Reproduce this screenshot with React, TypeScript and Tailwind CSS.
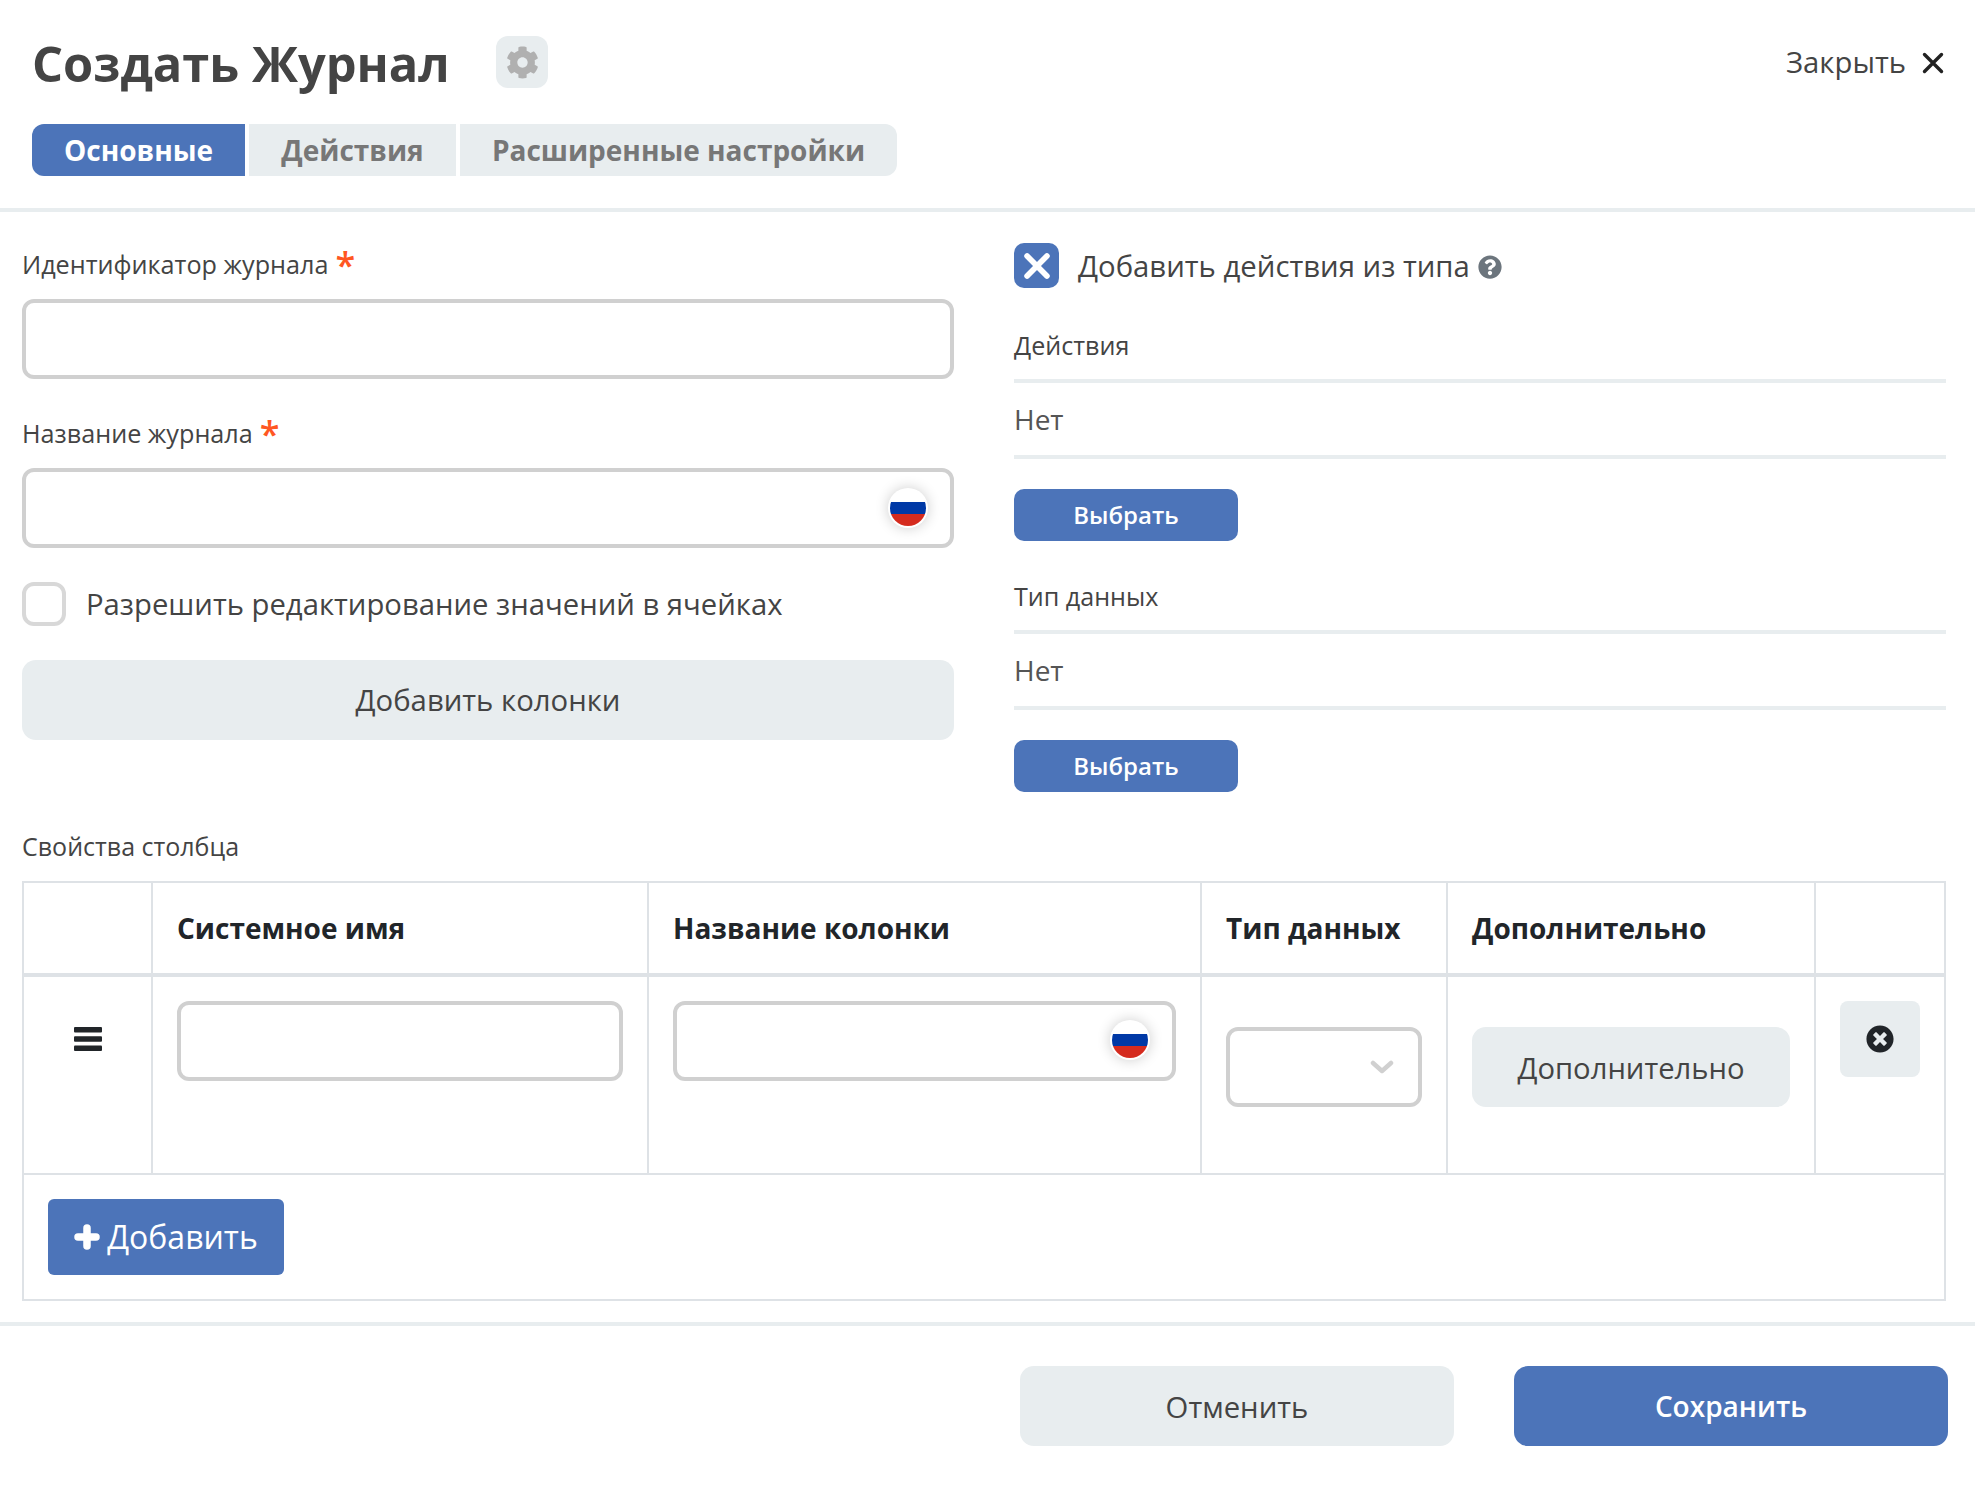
import { FaCog, FaQuestionCircle, FaTimesCircle } from 'react-icons/fa';

const Flag = ({ className }: { className: string }) => (
    <span className={`absolute flex size-10 items-center justify-center rounded-full bg-white shadow-[0_0_14px_rgba(0,0,0,0.2)] ${className}`}>
        <span className="flex size-9 flex-col overflow-hidden rounded-full">
            <span className="h-[12px] bg-white" />
            <span className="h-[12px] bg-[#0039a6]" />
            <span className="h-[12px] bg-[#d52b1e]" />
        </span>
    </span>
);

const FieldLabel = ({ text }: { text: string }) => (
    <div className="flex h-[34px] items-center text-[25.2px]">
        {text}
        <span className="mt-[-1px] ml-[7px] text-[36px] leading-none font-semibold text-[#ff5722]">*</span>
    </div>
);

const TextInput = ({ className = '' }: { className?: string }) => (
    <input className={`h-20 w-full rounded-[12px] border-4 border-[#d0d0d0] bg-white ${className}`} />
);

const SelectField = ({ label }: { label: string }) => (
    <div className="mb-[39px]">
        <div className="flex h-[54px] border-b-4 border-[#e8edef] pb-[16px] text-[25.1px] leading-[32px]">{label}</div>
        <div className="flex h-[76px] items-center border-b-4 border-[#e8edef] text-[28px] text-[#555]">Нет</div>
        <button className="mt-[30px] h-[52px] w-[224px] rounded-[10px] bg-[#4c74b9] text-[24px] font-semibold text-white">
            Выбрать
        </button>
    </div>
);

export default function App() {
    return (
        <div className="h-[1489px] w-[1975px] bg-white font-['Open_Sans',sans-serif] text-[#444444]">
            <header className="h-[212px] border-b-4 border-[#e8edef] pt-[36px] pl-8">
                <div className="flex h-[52px] items-center justify-between pr-[31px]">
                    <div className="flex items-center">
                        <h1 className="w-[464px] pt-[2px] text-[48.8px] leading-none font-bold">Создать Журнал</h1>
                        <button className="flex size-[52px] items-center justify-center rounded-[12px] bg-[#e8edef] text-[#b0b0b0]">
                            <FaCog size={33} />
                        </button>
                    </div>
                    <button className="flex items-center gap-4 text-[29.3px]">
                        <span className="pt-[2px]">Закрыть</span>
                        <svg viewBox="0 0 22 22" className="mt-[2px] size-[22px]" fill="none" stroke="#222222" strokeWidth="3.4" strokeLinecap="round">
                            <path d="M2.5 2.5l17 17M19.5 2.5l-17 17" />
                        </svg>
                    </button>
                </div>
                <nav className="mt-9 flex h-[52px] gap-1 text-[28px] font-bold text-[#777777]">
                    <button className="w-[213px] rounded-l-[12px] bg-[#4c74b9] text-white">Основные</button>
                    <button className="w-[207px] bg-[#e8edef]">Действия</button>
                    <button className="w-[437px] rounded-r-[12px] bg-[#e8edef]">Расширенные настройки</button>
                </nav>
            </header>

            <main className="pl-[22px]">
                <div className="grid grid-cols-[932px_932px] gap-x-[60px]">
                    <div className="pt-9">
                        <FieldLabel text="Идентификатор журнала" />
                        <TextInput className="mt-[17px]" />
                        <div className="mt-[38px]">
                            <FieldLabel text="Название журнала" />
                        </div>
                        <div className="relative mt-[17px]">
                            <TextInput />
                            <Flag className="top-5 right-[26px]" />
                        </div>
                        <label className="mt-[34px] flex h-11 items-center gap-5 text-[29.25px]">
                            <span className="size-11 rounded-[12px] border-4 border-[#d8d8d8]" />
                            <span className="pt-[2px]">Разрешить редактирование значений в ячейках</span>
                        </label>
                        <button className="mt-[34px] h-20 w-full rounded-[14px] bg-[#e8edef] pt-[2px] text-[29.3px]">Добавить колонки</button>
                    </div>
                    <div className="pt-[31px]">
                        <label className="flex h-[45px] items-center text-[29.3px]">
                            <span className="mr-[19px] flex size-[45px] items-center justify-center rounded-[10px] bg-[#4c74b9] text-white">
                                <svg viewBox="0 0 24 24" className="size-[34px]" fill="none" stroke="currentColor" strokeWidth="4" strokeLinecap="round">
                                    <path d="M5 5l14 14M19 5L5 19" />
                                </svg>
                            </span>
                            <span className="pt-[2px]">Добавить действия из типа</span>
                            <FaQuestionCircle size={24} className="mt-[2px] ml-2 text-[#6c757d]" />
                        </label>
                        <div className="mt-[41px]">
                            <SelectField label="Действия" />
                            <SelectField label="Тип данных" />
                        </div>
                    </div>
                </div>

                <div className="flex h-[32px] items-center text-[25px]">Свойства столбца</div>
                <table className="mt-[18px] w-[1922px] table-fixed border-collapse text-[#212529]">
                    <colgroup>
                        <col className="w-[129px]" />
                        <col className="w-[496px]" />
                        <col className="w-[553px]" />
                        <col className="w-[246px]" />
                        <col className="w-[368px]" />
                        <col className="w-[130px]" />
                    </colgroup>
                    <thead>
                        <tr className="h-[93px] text-left text-[28px] font-bold">
                            <th className="border-2 border-b-4 border-[#dee2e6]" />
                            <th className="border-2 border-b-4 border-[#dee2e6] pl-6 font-bold">Системное имя</th>
                            <th className="border-2 border-b-4 border-[#dee2e6] pl-6 font-bold">Название колонки</th>
                            <th className="border-2 border-b-4 border-[#dee2e6] pl-6 font-bold">Тип данных</th>
                            <th className="border-2 border-b-4 border-[#dee2e6] pl-6 font-bold">Дополнительно</th>
                            <th className="border-2 border-b-4 border-[#dee2e6]" />
                        </tr>
                    </thead>
                    <tbody>
                        <tr className="h-[199px]">
                            <td className="border-2 border-[#dee2e6] pt-[50px] align-top">
                                <svg viewBox="0 0 28 24" className="mx-auto h-6 w-7" fill="currentColor">
                                    <rect y="0" width="28" height="5.4" rx="1" />
                                    <rect y="9.3" width="28" height="5.4" rx="1" />
                                    <rect y="18.6" width="28" height="5.4" rx="1" />
                                </svg>
                            </td>
                            <td className="border-2 border-[#dee2e6] px-6 pt-6 align-top">
                                <TextInput />
                            </td>
                            <td className="border-2 border-[#dee2e6] px-6 pt-6 align-top">
                                <div className="relative">
                                    <TextInput />
                                    <Flag className="top-[19px] right-[26px]" />
                                </div>
                            </td>
                            <td className="border-2 border-[#dee2e6] px-6 pt-[50px] align-top">
                                <div className="flex h-20 w-[196px] items-center justify-end rounded-[12px] border-4 border-[#d0d0d0] pr-6 text-[#d0d0d0]">
                                    <svg viewBox="0 0 24 14" className="h-[14px] w-6" fill="none" stroke="currentColor" strokeWidth="4.5" strokeLinecap="round" strokeLinejoin="round">
                                        <path d="M3 3l9 8 9-8" />
                                    </svg>
                                </div>
                            </td>
                            <td className="border-2 border-[#dee2e6] px-6 pt-[50px] align-top">
                                <button className="h-20 w-[318px] rounded-[14px] bg-[#e8edef] pt-[3px] text-[29.2px] text-[#444444]">Дополнительно</button>
                            </td>
                            <td className="border-2 border-[#dee2e6] px-6 pt-6 align-top">
                                <button className="flex h-[76px] w-20 items-center justify-center rounded-[8px] bg-[#e8edef]">
                                    <FaTimesCircle size={28} />
                                </button>
                            </td>
                        </tr>
                    </tbody>
                    <tfoot>
                        <tr className="h-[126px]">
                            <td colSpan={6} className="border-2 border-[#dee2e6] px-6">
                                <button className="flex h-[76px] w-[236px] items-center justify-center gap-[7px] rounded-[6px] bg-[#4c74b9] text-[32px] text-white">
                                    <svg viewBox="0 0 26 26" className="size-[26px]" fill="none" stroke="currentColor" strokeWidth="7.5" strokeLinecap="round">
                                        <path d="M13 4v18M4 13h18" />
                                    </svg>
                                    Добавить
                                </button>
                            </td>
                        </tr>
                    </tfoot>
                </table>
            </main>

            <footer className="mt-[21px] flex justify-end gap-[60px] border-t-4 border-[#e8edef] pt-[40px] pr-[27px]">
                <button className="h-20 w-[434px] rounded-[14px] bg-[#e8edef] pt-[3px] text-[29.3px]">Отменить</button>
                <button className="h-20 w-[434px] rounded-[14px] bg-[#4c74b9] text-[28px] font-semibold text-white">Сохранить</button>
            </footer>
        </div>
    );
}
